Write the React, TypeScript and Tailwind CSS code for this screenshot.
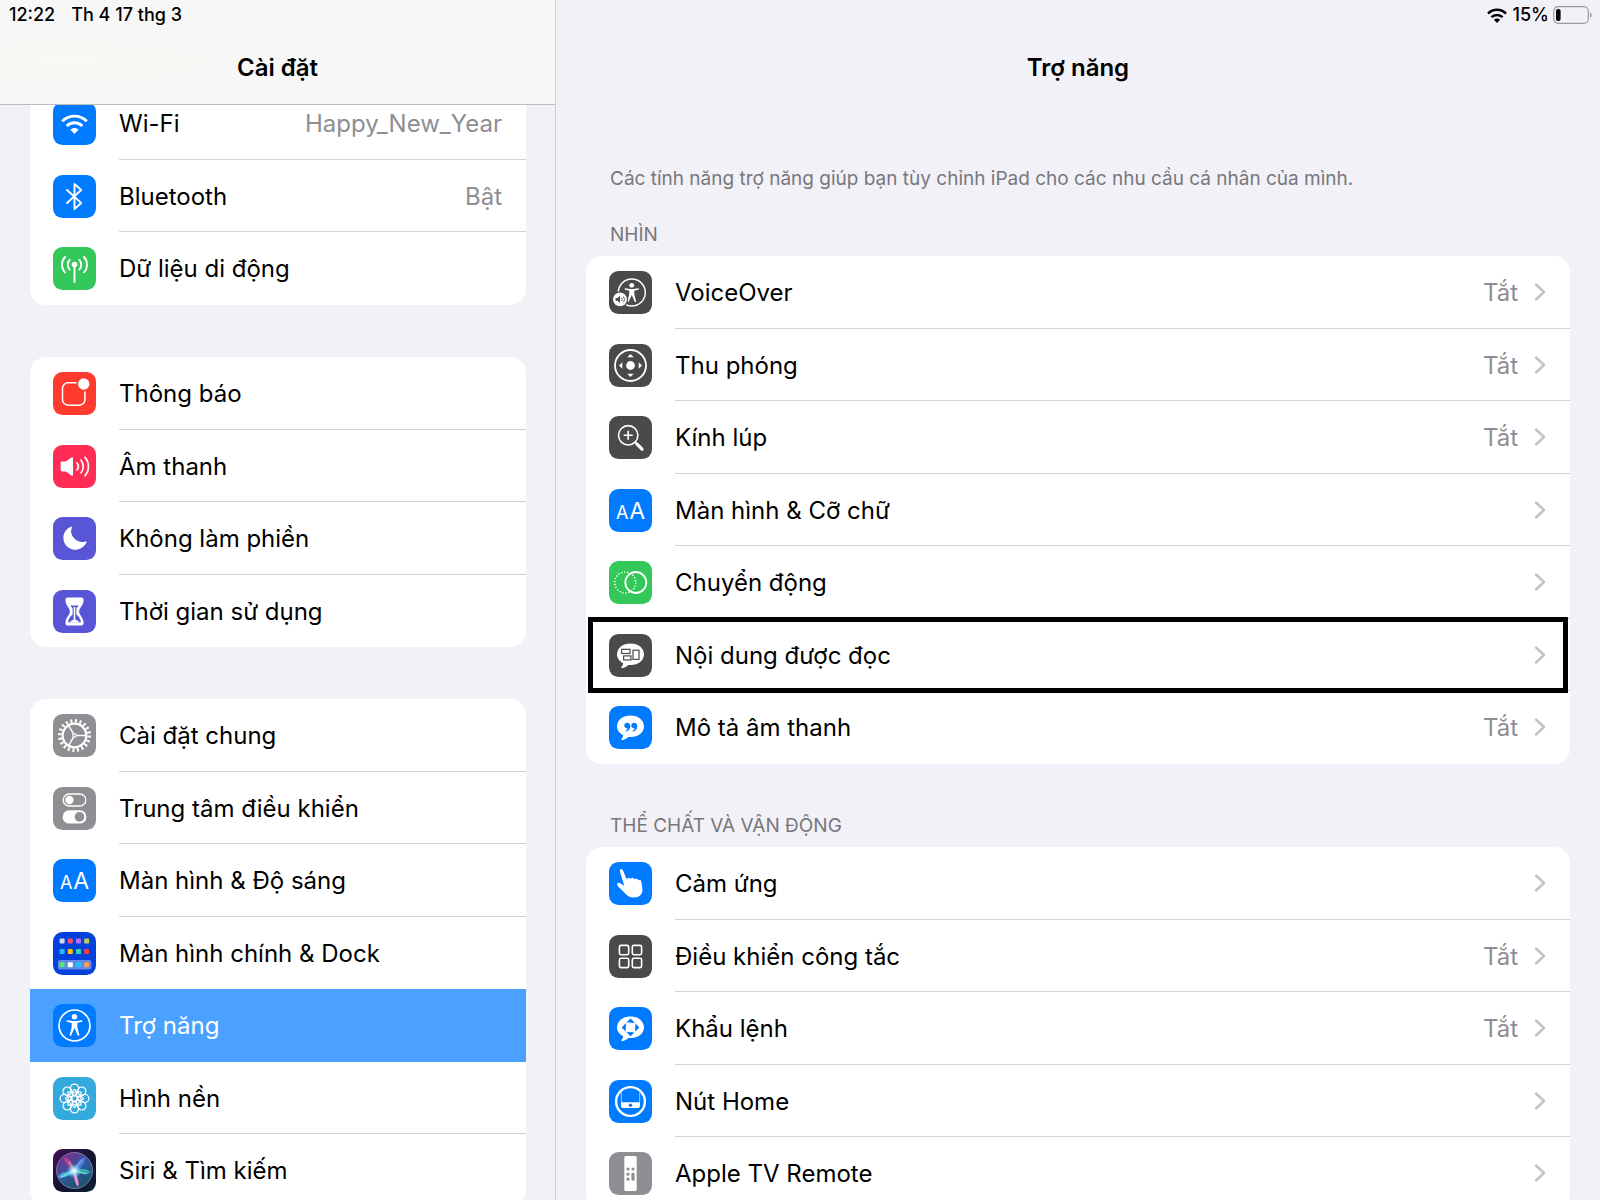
import type { ReactNode } from 'react'
import { clsx } from 'clsx'

interface RowItem {
  label: string
  icon: ReactNode
  value?: string
  active?: boolean
  focused?: boolean
}

const BLUE = '#007aff'
const GREEN = '#34c759'
const INDIGO = '#5856d6'
const GRAY = '#8e8e93'
const DARK = '#4a4a4a'

const ANGLES = [0, 45, 90, 135, 180, 225, 270, 315]

function Tile({ bg, children }: { bg: string; children: ReactNode }) {
  return (
    <svg viewBox="0 0 43 43" className="size-[43px] shrink-0" fill="none" aria-hidden="true">
      <rect width="43" height="43" rx="9.5" fill={bg} />
      {children}
    </svg>
  )
}

function WifiIcon() {
  return (
    <Tile bg={BLUE}>
      <g stroke="#fff" strokeWidth="2.9">
        <path d="M9.2 19.2C16 12.4 27 12.4 33.800 19.2" />
        <path d="M13.700 24c4.400-4.300 11.200-4.300 15.600 0" />
      </g>
      <path d="M17.400 27.700c2.300-2.200 5.900-2.200 8.200 0L21.500 32z" fill="#fff" />
    </Tile>
  )
}

function BluetoothIcon() {
  return (
    <Tile bg={BLUE}>
      <path d="M14 15l14.2 13-6.7 6V9l6.7 6L14 28" stroke="#fff" strokeWidth="1.9" strokeLinejoin="round" strokeLinecap="round" />
    </Tile>
  )
}

function CellularIcon() {
  return (
    <Tile bg={GREEN}>
      <circle cx="21.5" cy="17.5" r="2.8" fill="#fff" />
      <g stroke="#fff" strokeWidth="1.9" strokeLinecap="round">
        <path d="M21.5 18v17" />
        <path d="M16.700 12.8c-2.600 2.600-2.600 7 0 9.800M26.300 12.8c2.600 2.600 2.600 7 0 9.800" />
        <path d="M12 10c-4 4.200-4 11.200 0 15.400M31 10c4 4.200 4 11.200 0 15.400" />
      </g>
    </Tile>
  )
}

function NotificationIcon() {
  return (
    <Tile bg="#ff3b30">
      <rect x="9.5" y="10.8" width="22.4" height="22.4" rx="5.5" stroke="#fff" strokeWidth="1.5" />
      <circle cx="30.7" cy="12" r="7.4" fill="#ff3b30" />
      <circle cx="30.7" cy="12" r="5.7" fill="#fff" />
    </Tile>
  )
}

function SoundIcon() {
  return (
    <Tile bg="#ff2d55">
      <path d="M7.6 18q0-1.4 1.4-1.4h3.8l5.6-4.1q1.600-1 1.600.8v16.4q0 1.8-1.600.8l-5.600-4.1H9q-1.400 0-1.400-1.400z" fill="#fff" />
      <g stroke="#fff" strokeWidth="1.7" strokeLinecap="round">
        <path d="M24 18c1.5 2 1.5 5 0 7" />
        <path d="M28 15.200c3 3.600 3 9 0 12.600" />
        <path d="M32 12.400c4.600 5.200 4.600 13 0 18.200" />
      </g>
    </Tile>
  )
}

function MoonIcon() {
  return (
    <Tile bg={INDIGO}>
      <path d="M18.8 10.4c.4-.9-.3-1.2-1-.7A12 12 0 1 0 33.400 25.400c.5-.9 0-1.400-.9-1A11 11 0 0 1 18.8 10.400z" fill="#fff" />
    </Tile>
  )
}

function HourglassIcon() {
  return (
    <Tile bg={INDIGO}>
      <path d="M12.5 9.5q0-2 2-2h14q2 0 2 2v1c0 5-4.400 7.600-4.400 11s4.400 6 4.400 11v1q0 2-2 2h-14q-2 0-2-2v-1c0-5 4.400-7.600 4.400-11s-4.400-6-4.400-11z" fill="#fff" />
      <path d="M17.3 15.5h8.4q-1.200 1.700-2.300 2.800v6.200q3.600 2.500 4.400 6.200v1.600H15.200v-1.600q.8-3.700 4.400-6.200v-6.200q-1.100-1.100-2.300-2.800z" fill={INDIGO} />
      <path d="M21.5 17v13" stroke="#fff" strokeWidth="1.6" />
      <path d="M16.5 32.300q5-5.600 10 0z" fill="#fff" />
    </Tile>
  )
}

function GearIcon() {
  return (
    <Tile bg={GRAY}>
      <circle cx="21.5" cy="21.5" r="14.6" stroke="#fff" strokeWidth="3.8" strokeDasharray="2 2.587" />
      <circle cx="21.5" cy="21.5" r="11.8" stroke="#fff" strokeWidth="2.2" />
      <path d="M23.5 21.5h9.5M20.500 19.800l-4.800-8.200M20.500 23.200l-4.800 8.200" stroke="#fff" strokeWidth="1.5" />
      <circle cx="21.5" cy="21.5" r="1.7" stroke="#fff" strokeWidth="1.2" />
    </Tile>
  )
}

function TogglesIcon() {
  return (
    <Tile bg={GRAY}>
      <rect x="10.2" y="7" width="22.6" height="12" rx="6" stroke="#fff" strokeWidth="1.3" />
      <circle cx="16.4" cy="13" r="4.2" fill="#fff" />
      <rect x="9.6" y="23.2" width="23.8" height="13.4" rx="6.7" fill="#fff" />
      <circle cx="26.5" cy="29.9" r="4.8" fill={GRAY} />
    </Tile>
  )
}

function TextSizeIcon() {
  return (
    <Tile bg={BLUE}>
      <text x="13.3" y="30.3" fontSize="18" fill="#fff" textAnchor="middle">A</text>
      <text x="28.2" y="30.3" fontSize="23" fill="#fff" textAnchor="middle">A</text>
    </Tile>
  )
}

function HomeScreenIcon() {
  const rows = [
    { y: 6.5, colors: ['#d5d9ee', '#ff4f70', '#b76df7', '#bdd24c'] },
    { y: 17, colors: ['#27b4f8', '#ffc20a', '#34d8ac', '#ff3b38'] },
    { y: 30.3, colors: ['#56e678', '#ffffff', '#1fc4ff', '#ff9d4d'] },
  ]
  return (
    <Tile bg="#0440dc">
      <rect x="5" y="28" width="33.5" height="9.6" rx="2" fill="#fff" fillOpacity=".38" />
      {rows.map((row) =>
        row.colors.map((color, i) => (
          <rect key={color} x={6.6 + i * 8.2} y={row.y} width="5" height="5" rx="1" fill={color} />
        ))
      )}
    </Tile>
  )
}

function Person() {
  return (
    <g fill="#fff">
      <circle cx="21.5" cy="12.8" r="2.7" />
      <path d="M14.400 16.200l5.300.8h3.600l5.300-.8c1-.1 1.200 1.400.2 1.600l-4.500 1.100v4.200l2 7.600c.3 1.200-1.200 1.600-1.600.6l-3.200-7.300-3.200 7.300c-.4 1-1.900.6-1.600-.6l2-7.600v-4.200l-4.500-1.100c-1-.2-.8-1.700.2-1.600z" />
    </g>
  )
}

function AccessibilityIcon() {
  return (
    <Tile bg={BLUE}>
      <circle cx="21.5" cy="21.5" r="15.5" stroke="#fff" strokeWidth="1.7" />
      <Person />
    </Tile>
  )
}

function WallpaperIcon() {
  return (
    <Tile bg="#34aadc">
      <g stroke="#fff" strokeWidth="1.3">
        {ANGLES.map((a) => (
          <g key={a} transform={`rotate(${a} 21.5 21.5)`}>
            <circle cx="21.5" cy="11.2" r="4.1" />
            <path d="M21.5 18.7c-3-2.400-2.600-4.800 0-6.200 2.600 1.400 3 3.800 0 6.200z" />
          </g>
        ))}
        <circle cx="21.5" cy="21.5" r="2.8" />
      </g>
    </Tile>
  )
}

function SiriIcon() {
  return (
    <Tile bg="url(#siri-bg)">
      <defs>
        <linearGradient id="siri-bg" x1="0" y1="0" x2="1" y2="1">
          <stop offset="0" stopColor="#43105a" />
          <stop offset=".5" stopColor="#14142e" />
          <stop offset="1" stopColor="#0b2036" />
        </linearGradient>
        <linearGradient id="siri-orb" x1=".2" y1="0" x2=".8" y2="1">
          <stop offset="0" stopColor="#7a2d8c" />
          <stop offset=".5" stopColor="#31589f" />
          <stop offset="1" stopColor="#12525e" />
        </linearGradient>
        <radialGradient id="siri-glow">
          <stop offset="0" stopColor="#fff" />
          <stop offset=".4" stopColor="#b9efff" stopOpacity=".8" />
          <stop offset="1" stopColor="#6ad5ff" stopOpacity="0" />
        </radialGradient>
      </defs>
      <circle cx="21.5" cy="21.5" r="18" fill="url(#siri-orb)" stroke="#b7a3d6" strokeOpacity=".75" strokeWidth=".8" />
      <path d="M21 22Q11 15 11 8q9 2 10 14z" fill="#d6458f" fillOpacity=".75" />
      <path d="M21 22q3-12 11-14 1 10-11 14z" fill="#4a83e8" fillOpacity=".8" />
      <path d="M21 22q10-5 17 1-7 5-17-1z" fill="#2fd0b4" fillOpacity=".7" />
      <path d="M21 22q6 8 4.500 16-5.500-4-4.500-16z" fill="#e879c0" fillOpacity=".9" />
      <path d="M21 22q-6 8-16 6 3-6 16-6z" fill="#3fdcf2" fillOpacity=".75" />
      <path d="M7 29l14-7.500L34 25M21 21.500L24.500 36M16 13l5 8.500L29 11" stroke="#e9fbff" strokeOpacity=".7" strokeWidth=".8" />
      <circle cx="21" cy="22" r="7.5" fill="url(#siri-glow)" />
    </Tile>
  )
}

function VoiceOverIcon() {
  return (
    <Tile bg={DARK}>
      <circle cx="22.8" cy="21.5" r="13.5" stroke="#fff" strokeWidth="1.5" />
      <g transform="translate(3.4 3) scale(.9 .88)">
        <Person />
      </g>
      <circle cx="11" cy="28.4" r="8.2" fill={DARK} />
      <circle cx="11" cy="28.4" r="6.9" fill="#fff" />
      <path d="M6.600 27h1.800l2.600-2.200v7.200l-2.600-2.200H6.600z" fill={DARK} />
      <path d="M12.600 26.700q1 1.700 0 3.400M14.500 25.500q2 2.900 0 5.800" stroke={DARK} strokeWidth=".9" />
    </Tile>
  )
}

function ZoomIcon() {
  return (
    <Tile bg={DARK}>
      <circle cx="21.5" cy="21.5" r="15.5" stroke="#fff" strokeWidth="1.8" />
      <circle cx="21.5" cy="21.5" r="4.4" fill="#fff" />
      <g fill="#fff">
        {[0, 90, 180, 270].map((a) => (
          <path key={a} d="M21.5 10l3.200 3.300h-6.400z" transform={`rotate(${a} 21.5 21.5)`} />
        ))}
      </g>
    </Tile>
  )
}

function MagnifierIcon() {
  return (
    <Tile bg={DARK}>
      <circle cx="19.2" cy="19.3" r="9.7" stroke="#fff" strokeWidth="1.6" />
      <path d="M19.2 14.800v9M14.700 19.300h9" stroke="#fff" strokeWidth="1.6" />
      <path d="M26 26.100l2 2" stroke="#fff" strokeWidth="1.8" />
      <path d="M28 28.200l5 5" stroke="#fff" strokeWidth="3.2" strokeLinecap="round" />
    </Tile>
  )
}

function MotionIcon() {
  return (
    <Tile bg={GREEN}>
      <circle cx="16.2" cy="21.5" r="10.5" stroke="#fff" strokeWidth="1.5" strokeDasharray="1.3 1.7" />
      <circle cx="26.8" cy="21.5" r="10.5" stroke="#fff" strokeWidth="1.8" />
    </Tile>
  )
}

function Bubble({ bg, children }: { bg: string; children: ReactNode }) {
  return (
    <Tile bg={bg}>
      <path d="M21.5 9.400c7.700 0 13.500 4.700 13.500 10.900s-5.800 10.800-13.200 10.800c-1 0-1.800 0-2.600-.2-1.600 1.600-3.700 2.900-6 3.200-1 .1-1.200-.7-.6-1.400.9-1 1.500-2.200 1.600-3.500C10.400 27.300 8 24.200 8 20.300 8 14.100 13.800 9.400 21.500 9.400z" fill="#fff" />
      {children}
    </Tile>
  )
}

function SpokenContentIcon() {
  return (
    <Bubble bg={DARK}>
      <g stroke={DARK} strokeWidth="1.2">
        <rect x="12.7" y="15.3" width="8.3" height="4.2" />
        <rect x="14.6" y="21.9" width="7.4" height="4" />
        <rect x="24" y="16.2" width="6" height="9.2" />
      </g>
    </Bubble>
  )
}

function AudioDescriptionIcon() {
  return (
    <Bubble bg={BLUE}>
      <g fill={BLUE}>
        {[0, 7].map((dx) => (
          <path
            key={dx}
            transform={`translate(${dx} 0)`}
            d="M18 16.700c2.200 0 3.300 1.500 3.300 3.600 0 2.600-1.600 4.700-4 5.200-.8.1-1-.7-.3-1.100 1-.5 1.600-1.200 1.800-2.100-2 .4-3.500-.8-3.500-2.700 0-1.700 1.200-2.900 2.700-2.900z"
          />
        ))}
      </g>
    </Bubble>
  )
}

function VoiceControlIcon() {
  return (
    <Bubble bg={BLUE}>
      <g fill={BLUE}>
        {[0, 90, 180, 270].map((a) => (
          <path key={a} d="M21.5 11.600l4.300 4.200q-4.300-1.800-8.600 0z" transform={`rotate(${a} 21.5 20.4)`} />
        ))}
      </g>
      <circle cx="21.5" cy="20.4" r="5.6" stroke={BLUE} strokeWidth="1.6" strokeDasharray="5 3.796" strokeDashoffset="2.5" />
    </Bubble>
  )
}

function TouchIcon() {
  return (
    <Tile bg={BLUE}>
      <path d="M10.8 9.300q-.3-2 1.400-2.200 1.300 0 1.900 1.700l3.700 8.700q.6-2 2.200-1.800 1.300.2 1.600 1.600.9-1.800 2.500-1.400 1.200.3 1.400 1.700 1-1.500 2.500-.9 1.100.5 1.200 1.800 1.300-1.200 2.400-.2.7.7.9 2.200l.9 6.500c.6 5.500-3.400 8.500-8.400 8.500-4.200 0-7.400-2-9.700-5l-6.200-6q-1.800-2-.6-3.200 1.200-1 2.900 0l4 2.800z" fill="#fff" />
    </Tile>
  )
}

function SwitchControlIcon() {
  return (
    <Tile bg={DARK}>
      <g stroke="#fff" strokeWidth="1.6">
        <rect x="10.4" y="10.4" width="9.3" height="9.3" rx="1.6" />
        <rect x="23.3" y="10.4" width="9.3" height="9.3" rx="1.6" />
        <rect x="10.4" y="23.3" width="9.3" height="9.3" rx="1.6" />
        <rect x="23.3" y="23.3" width="9.3" height="9.3" rx="1.6" />
      </g>
    </Tile>
  )
}

function HomeButtonIcon() {
  return (
    <Tile bg={BLUE}>
      <path d="M12.3 22V12.500M30.700 22V12.500" stroke="#fff" strokeOpacity=".7" strokeWidth=".9" />
      <path d="M12 22.300h19v3.600q0 2-2 2H14q-2 0-2-2z" fill="#fff" />
      <circle cx="21.5" cy="25.2" r="1.7" fill={BLUE} />
      <circle cx="21.5" cy="21.5" r="14.4" stroke="#fff" strokeWidth="2.4" />
    </Tile>
  )
}

function RemoteIcon() {
  return (
    <Tile bg={GRAY}>
      <rect x="15.3" y="4" width="12.4" height="35" rx="1.6" fill="#fff" />
      <g fill={GRAY}>
        <circle cx="19" cy="17" r="1.6" />
        <circle cx="24" cy="17" r="1.6" />
        <circle cx="19" cy="22.2" r="1.6" />
        <circle cx="19" cy="27.2" r="1.6" />
        <rect x="22.4" y="20.6" width="3.2" height="8.2" rx="1.6" />
      </g>
    </Tile>
  )
}

const sidebarGroups: RowItem[][] = [
  [
    { label: 'Wi-Fi', icon: <WifiIcon />, value: 'Happy_New_Year' },
    { label: 'Bluetooth', icon: <BluetoothIcon />, value: 'Bật' },
    { label: 'Dữ liệu di động', icon: <CellularIcon /> },
  ],
  [
    { label: 'Thông báo', icon: <NotificationIcon /> },
    { label: 'Âm thanh', icon: <SoundIcon /> },
    { label: 'Không làm phiền', icon: <MoonIcon /> },
    { label: 'Thời gian sử dụng', icon: <HourglassIcon /> },
  ],
  [
    { label: 'Cài đặt chung', icon: <GearIcon /> },
    { label: 'Trung tâm điều khiển', icon: <TogglesIcon /> },
    { label: 'Màn hình & Độ sáng', icon: <TextSizeIcon /> },
    { label: 'Màn hình chính & Dock', icon: <HomeScreenIcon /> },
    { label: 'Trợ năng', icon: <AccessibilityIcon />, active: true },
    { label: 'Hình nền', icon: <WallpaperIcon /> },
    { label: 'Siri & Tìm kiếm', icon: <SiriIcon /> },
  ],
]

const sections: { title: string; items: RowItem[] }[] = [
  {
    title: 'NHÌN',
    items: [
      { label: 'VoiceOver', icon: <VoiceOverIcon />, value: 'Tắt' },
      { label: 'Thu phóng', icon: <ZoomIcon />, value: 'Tắt' },
      { label: 'Kính lúp', icon: <MagnifierIcon />, value: 'Tắt' },
      { label: 'Màn hình & Cỡ chữ', icon: <TextSizeIcon /> },
      { label: 'Chuyển động', icon: <MotionIcon /> },
      { label: 'Nội dung được đọc', icon: <SpokenContentIcon />, focused: true },
      { label: 'Mô tả âm thanh', icon: <AudioDescriptionIcon />, value: 'Tắt' },
    ],
  },
  {
    title: 'THỂ CHẤT VÀ VẬN ĐỘNG',
    items: [
      { label: 'Cảm ứng', icon: <TouchIcon /> },
      { label: 'Điều khiển công tắc', icon: <SwitchControlIcon />, value: 'Tắt' },
      { label: 'Khẩu lệnh', icon: <VoiceControlIcon />, value: 'Tắt' },
      { label: 'Nút Home', icon: <HomeButtonIcon /> },
      { label: 'Apple TV Remote', icon: <RemoteIcon /> },
    ],
  },
]

function Chevron() {
  return (
    <svg viewBox="0 0 12 18" className="ml-4 h-[18px] w-3 shrink-0" fill="none" aria-hidden="true">
      <path d="M2 1.500L10 9l-8 7.500" stroke="#c4c4c7" strokeWidth="2.5" strokeLinecap="round" strokeLinejoin="round" />
    </svg>
  )
}

function RowList({ items, chevron }: { items: RowItem[]; chevron?: boolean }) {
  return (
    <ul className="rounded-2xl bg-white">
      {items.map((item, i) => {
        const divider = i < items.length - 1 && !item.active && !items[i + 1].active
        return (
          <li key={item.label} className="relative odd:h-[73px] even:h-[72px]">
            <a
              href="#"
              className={clsx('flex h-full items-center pl-[23px]', item.active ? 'bg-[#4ba1ff] text-white' : 'text-black')}
            >
              {item.icon}
              <span
                className={clsx(
                  'ml-[23px] flex min-w-0 flex-1 items-center self-stretch border-b pr-6',
                  divider ? 'border-[#d3d3d6]' : 'border-transparent'
                )}
              >
                <span className="flex-1 truncate pt-0.5 leading-9">{item.label}</span>
                {item.value && <span className="pt-0.5 leading-9 text-[#8e8e92]">{item.value}</span>}
                {chevron && <Chevron />}
              </span>
            </a>
            {item.focused && (
              <div className="pointer-events-none absolute inset-x-0.5 -inset-y-0.5 z-10 border-[5px] border-black" />
            )}
          </li>
        )
      })}
    </ul>
  )
}

function Sidebar() {
  return (
    <aside className="w-[556px] shrink-0 overflow-hidden border-r border-[#cfced4]">
      <header className="relative z-10 h-[105px] border-b border-[#bdbdbf] bg-[#f7f7f7] bg-[radial-gradient(ellipse_at_12%_60%,#f9f8f1_0%,#f7f7f7_30%)]">
        <div className="flex h-[30px] items-center gap-4 pl-[9px] text-lg font-medium">
          <time>12:22</time>
          <span>Th 4 17 thg 3</span>
        </div>
        <h1 className="flex h-[75px] items-center justify-center text-2xl font-semibold">Cài đặt</h1>
      </header>
      {/* list is scrolled a little way under the header */}
      <nav className="-mt-[18px] flex flex-col gap-[52px] pl-[30px] pr-[29px]">
        {sidebarGroups.map((group) => (
          <RowList key={group[0].label} items={group} />
        ))}
      </nav>
    </aside>
  )
}

function StatusIcons() {
  return (
    <div className="flex h-[30px] items-center justify-end gap-1 pr-2 text-lg font-medium">
      <svg viewBox="0 0 20 15" className="mr-0.5 h-[15px] w-5" fill="none" aria-hidden="true">
        <path d="M1 5.600C6 .6 14 .6 19 5.600M4.400 9.200c3.100-3 8.100-3 11.200 0" stroke="#000" strokeWidth="2.5" />
        <path d="M6.900 11.700c1.700-1.600 4.500-1.600 6.200 0L10 14.900z" fill="#000" />
      </svg>
      <span>15%</span>
      <svg viewBox="0 0 39 18" className="h-[18px] w-[39px]" fill="none" aria-hidden="true">
        <rect x=".7" y=".7" width="34.6" height="16.6" rx="4.5" stroke="#9b9b9f" strokeWidth="1.2" />
        <rect x="3" y="3" width="4.6" height="12" rx="2" fill="#000" />
        <path d="M37 6.200q1.700.8 1.700 2.800T37 11.800z" fill="#9b9b9f" />
      </svg>
    </div>
  )
}

export default function App() {
  return (
    <div className="flex h-screen overflow-hidden bg-[#f2f1f7] font-[Inter,'Noto_Sans',sans-serif] text-2xl text-black">
      <Sidebar />
      <main className="min-w-0 flex-1 overflow-hidden">
        <StatusIcons />
        <h2 className="flex h-[75px] items-center justify-center text-2xl font-semibold">Trợ năng</h2>
        <div className="px-[30px]">
          <p className="mt-[60px] pl-6 text-[19px] leading-7 text-[#77777c]">
            Các tính năng trợ năng giúp bạn tùy chỉnh iPad cho các nhu cầu cá nhân của mình.
          </p>
          <div className="mt-7 flex flex-col gap-12">
            {sections.map((section) => (
              <section key={section.title}>
                <h3 className="mb-[7px] pl-6 text-[19px] leading-7 text-[#77777c]">{section.title}</h3>
                <RowList items={section.items} chevron />
              </section>
            ))}
          </div>
        </div>
      </main>
    </div>
  )
}
